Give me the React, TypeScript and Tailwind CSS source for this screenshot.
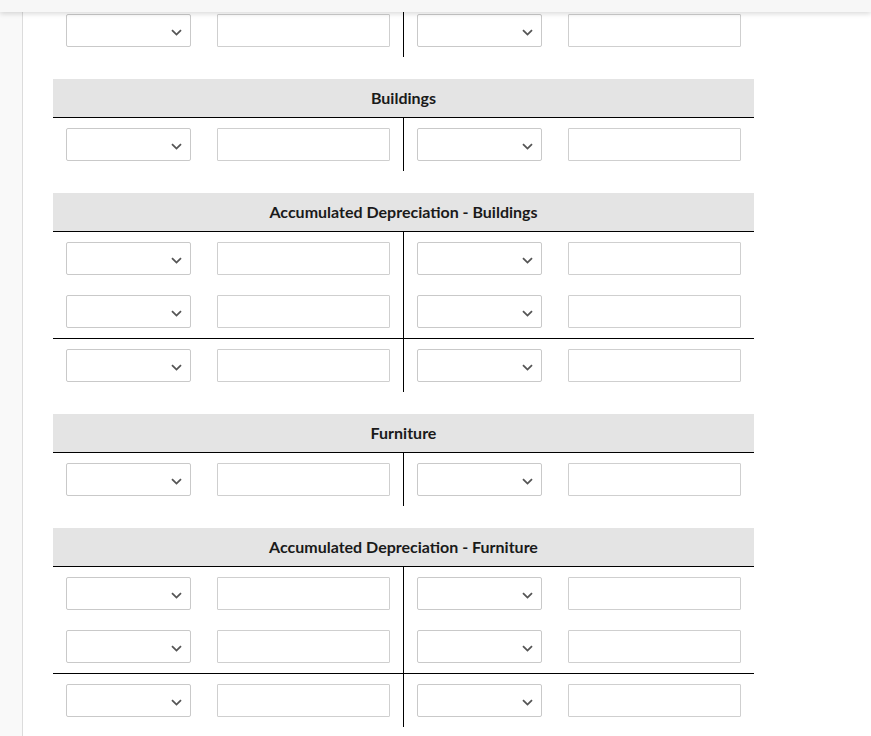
import type { ReactNode } from "react";

function Chevron() {
  return (
    <svg
      width="11"
      height="7"
      viewBox="0 0 11 7"
      className="pointer-events-none absolute right-[8px] top-[14px]"
    >
      <path d="M1 1.2 L5.5 5.6 L10 1.2" fill="none" stroke="#555" strokeWidth="1.8" />
    </svg>
  );
}

function Cell() {
  return (
    <div className="flex gap-[26px] px-[13px] py-[10px]">
      <div className="relative h-[33px] w-[125px] rounded-[2px] border border-[#c9c9c9] bg-white">
        <Chevron />
      </div>
      <div className="h-[33px] flex-1 rounded-[1px] border border-[#cfcfcf] bg-white" />
    </div>
  );
}

function Row({ line = false }: { line?: boolean }) {
  return (
    <div className={line ? "grid grid-cols-2 border-t border-black" : "grid grid-cols-2"}>
      <div className="border-r border-black">
        <Cell />
      </div>
      <div>
        <Cell />
      </div>
    </div>
  );
}

function Account({ title, rows }: { title?: string; rows: ReactNode }) {
  return (
    <div className="mb-[22px]">
      {title && (
        <div className="flex h-[39px] items-center justify-center border-b border-black bg-[#e4e4e4] text-[16px] font-bold text-[#1a1a1a]">
          {title}
        </div>
      )}
      {rows}
    </div>
  );
}

function ThreeRows() {
  return (
    <>
      <Row />
      <Row />
      <Row line />
    </>
  );
}

export default function App() {
  return (
    <div
      className="relative flex h-[736px] w-[871px] overflow-hidden bg-white"
      style={{ fontFamily: "Lato, 'Liberation Sans', sans-serif" }}
    >
      <div className="absolute left-0 right-0 top-0 z-10 h-[12px] bg-[#f7f7f7] shadow-[0_2px_5px_rgba(0,0,0,0.14)]" />
      <div className="h-full w-[23px] shrink-0 border-r border-[#dcdcdc] bg-[#f9f9f9]" />
      <div className="pl-[30px] pt-[4px]">
        <div className="w-[701px]">
          <Account rows={<Row />} />
          <Account title="Buildings" rows={<Row />} />
          <Account title="Accumulated Depreciation - Buildings" rows={<ThreeRows />} />
          <Account title="Furniture" rows={<Row />} />
          <Account title="Accumulated Depreciation - Furniture" rows={<ThreeRows />} />
        </div>
      </div>
    </div>
  );
}
